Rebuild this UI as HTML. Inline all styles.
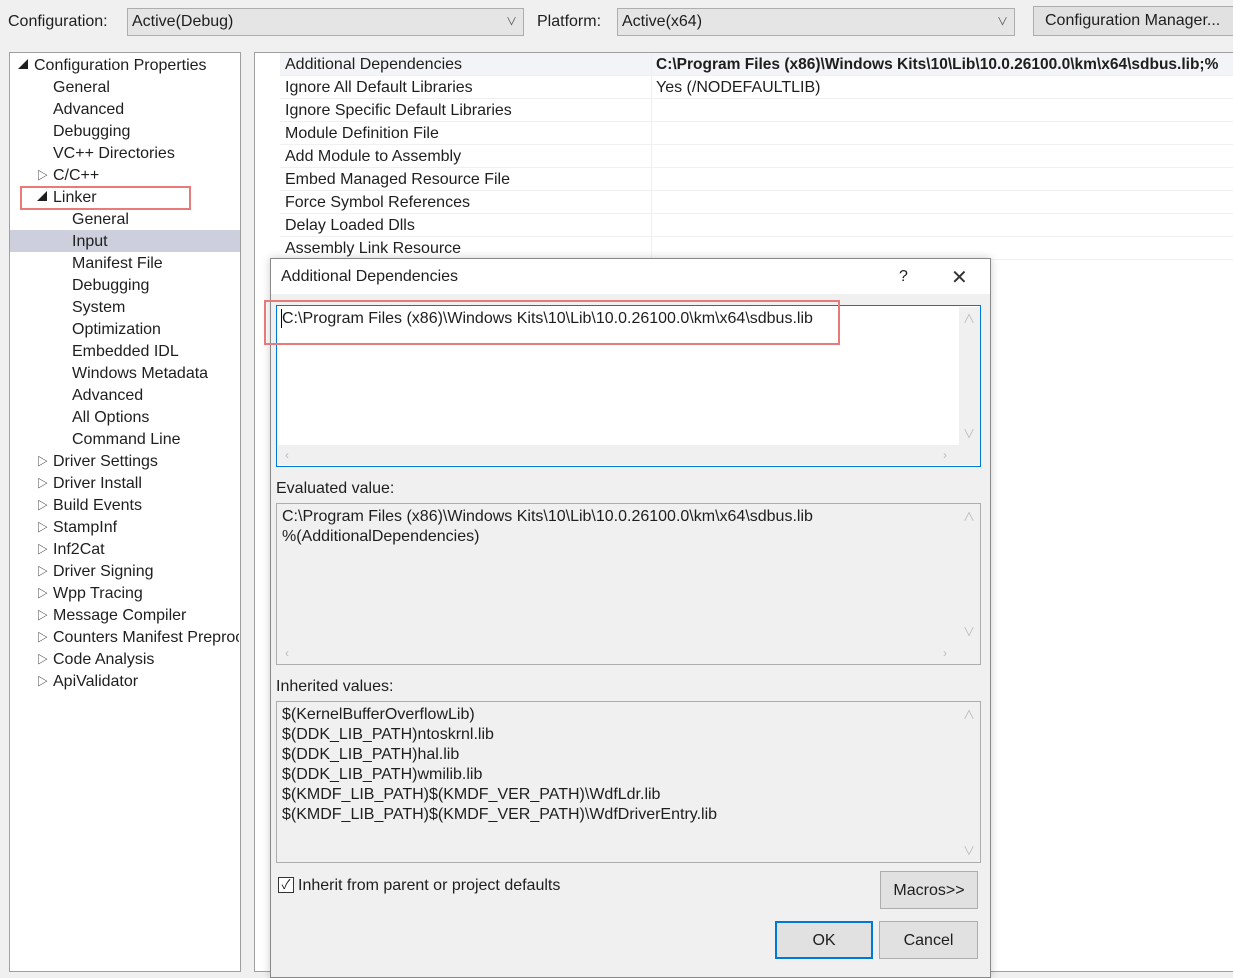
<!DOCTYPE html>
<html><head><style>
*{box-sizing:border-box;margin:0;padding:0}
body{width:1233px;height:965px;background:#f0f0f0;font-family:"Liberation Sans","Noto Sans CJK SC",sans-serif;font-size:16px;color:#1e1e1e;position:relative;overflow:hidden}
.a{position:absolute;white-space:nowrap}
.combo{position:absolute;background:#e5e5e5;border:1px solid #adadad;height:28px;line-height:26px;padding-left:4px}
.combo .v{position:absolute;right:6px;top:0;font-size:11px;color:#555}
.btn{position:absolute;background:#e1e1e1;border:1px solid #adadad;text-align:center}
.tree .a{line-height:22px}
.grid .r{position:absolute;left:280px;width:953px;height:23px;border-bottom:1px solid #f0f0f0;line-height:24px}
.box{position:absolute;left:276px;width:705px;height:162px;border:1px solid #adadad;background:#f0f0f0}
.box .t{position:absolute;left:5px;top:3px;line-height:20px;white-space:pre}
.ar{position:absolute;color:#bbb;font-size:12px;line-height:12px}
</style></head><body>
<div class="a" style="left:8px;top:13px">Configuration:</div>
<div class="combo" style="left:127px;top:8px;width:397px">Active(Debug)<span class="v">&#8744;</span></div>
<div class="a" style="left:537px;top:13px">Platform:</div>
<div class="combo" style="left:617px;top:8px;width:398px">Active(x64)<span class="v">&#8744;</span></div>
<div class="btn" style="left:1033px;top:6px;width:210px;height:30px;line-height:28px;text-align:left;padding-left:11px">Configuration Manager...</div>

<div class="tree" style="position:absolute;left:9px;top:52px;width:232px;height:920px;background:#fff;border:1px solid #a0a0a0">
<div class="a" style="left:0;top:177px;width:230px;height:22px;background:#cdd0dc"></div>
<div class="a" style="left:10px;top:133px;width:171px;height:24px;border:2px solid #e97a7a"></div>
<div class="a" style="left:8px;top:2px;font-size:10px">&#9698;</div>
<div class="a" style="left:24px;top:2px">Configuration Properties</div>
<div class="a" style="left:43px;top:24px">General</div>
<div class="a" style="left:43px;top:46px">Advanced</div>
<div class="a" style="left:43px;top:68px">Debugging</div>
<div class="a" style="left:43px;top:90px">VC++ Directories</div>
<div class="a" style="left:27px;top:112px;font-size:11px">&#9655;</div><div class="a" style="left:43px;top:112px">C/C++</div>
<div class="a" style="left:27px;top:134px;font-size:10px">&#9698;</div><div class="a" style="left:43px;top:134px">Linker</div>
<div class="a" style="left:62px;top:156px">General</div>
<div class="a" style="left:62px;top:178px">Input</div>
<div class="a" style="left:62px;top:200px">Manifest File</div>
<div class="a" style="left:62px;top:222px">Debugging</div>
<div class="a" style="left:62px;top:244px">System</div>
<div class="a" style="left:62px;top:266px">Optimization</div>
<div class="a" style="left:62px;top:288px">Embedded IDL</div>
<div class="a" style="left:62px;top:310px">Windows Metadata</div>
<div class="a" style="left:62px;top:332px">Advanced</div>
<div class="a" style="left:62px;top:354px">All Options</div>
<div class="a" style="left:62px;top:376px">Command Line</div>
<div class="a" style="left:27px;top:398px;font-size:11px">&#9655;</div><div class="a" style="left:43px;top:398px">Driver Settings</div>
<div class="a" style="left:27px;top:420px;font-size:11px">&#9655;</div><div class="a" style="left:43px;top:420px">Driver Install</div>
<div class="a" style="left:27px;top:442px;font-size:11px">&#9655;</div><div class="a" style="left:43px;top:442px">Build Events</div>
<div class="a" style="left:27px;top:464px;font-size:11px">&#9655;</div><div class="a" style="left:43px;top:464px">StampInf</div>
<div class="a" style="left:27px;top:486px;font-size:11px">&#9655;</div><div class="a" style="left:43px;top:486px">Inf2Cat</div>
<div class="a" style="left:27px;top:508px;font-size:11px">&#9655;</div><div class="a" style="left:43px;top:508px">Driver Signing</div>
<div class="a" style="left:27px;top:530px;font-size:11px">&#9655;</div><div class="a" style="left:43px;top:530px">Wpp Tracing</div>
<div class="a" style="left:27px;top:552px;font-size:11px">&#9655;</div><div class="a" style="left:43px;top:552px">Message Compiler</div>
<div class="a" style="left:27px;top:574px;font-size:11px">&#9655;</div><div class="a" style="left:43px;top:574px;width:186px;overflow:hidden">Counters Manifest Preprocessor</div>
<div class="a" style="left:27px;top:596px;font-size:11px">&#9655;</div><div class="a" style="left:43px;top:596px">Code Analysis</div>
<div class="a" style="left:27px;top:618px;font-size:11px">&#9655;</div><div class="a" style="left:43px;top:618px">ApiValidator</div>
</div>

<div class="grid" style="position:absolute;left:0;top:0">
<div style="position:absolute;left:254px;top:52px;width:990px;height:920px;background:#fff;border:1px solid #a0a0a0"></div>
<div class="r" style="top:53px;background:#f2f4f8"><span class="a" style="left:5px">Additional Dependencies</span><span class="a" style="left:376px;font-weight:bold;font-size:15.5px">C:\Program Files (x86)\Windows Kits\10\Lib\10.0.26100.0\km\x64\sdbus.lib;%</span></div>
<div class="r" style="top:76px"><span class="a" style="left:5px">Ignore All Default Libraries</span><span class="a" style="left:376px">Yes (/NODEFAULTLIB)</span></div>
<div class="r" style="top:99px"><span class="a" style="left:5px">Ignore Specific Default Libraries</span></div>
<div class="r" style="top:122px"><span class="a" style="left:5px">Module Definition File</span></div>
<div class="r" style="top:145px"><span class="a" style="left:5px">Add Module to Assembly</span></div>
<div class="r" style="top:168px"><span class="a" style="left:5px">Embed Managed Resource File</span></div>
<div class="r" style="top:191px"><span class="a" style="left:5px">Force Symbol References</span></div>
<div class="r" style="top:214px"><span class="a" style="left:5px">Delay Loaded Dlls</span></div>
<div class="r" style="top:237px"><span class="a" style="left:5px">Assembly Link Resource</span></div>
<div style="position:absolute;left:651px;top:53px;width:1px;height:207px;background:#f0f0f0"></div>
</div>

<div style="position:absolute;left:270px;top:258px;width:721px;height:720px;background:#f0f0f0;border:1px solid #888;box-shadow:0 0 8px rgba(0,0,0,.2)">
<div style="position:absolute;left:0;top:0;right:0;height:35px;background:#fff"></div>
<div class="a" style="left:10px;top:9px">Additional Dependencies</div>
<div class="a" style="left:628px;top:9px">?</div>
<div class="a" style="left:680px;top:6px;font-size:20px;font-weight:300;color:#333">&#10005;</div>
</div>

<div class="box" style="top:305px;border-color:#0078d7;background:#fff"><div class="t" style="top:3px">C:\Program Files (x86)\Windows Kits\10\Lib\10.0.26100.0\km\x64\sdbus.lib</div>
<div style="position:absolute;left:682px;top:1px;width:21px;height:158px;background:#f0f0f0"></div>
<div style="position:absolute;left:1px;top:139px;width:682px;height:20px;background:#f0f0f0"></div>
<div class="ar" style="left:686px;top:7px">&#8743;</div><div class="ar" style="left:686px;top:122px">&#8744;</div>
<div class="ar" style="left:8px;top:143px">&lsaquo;</div><div class="ar" style="left:666px;top:143px">&rsaquo;</div></div>
<div class="a" style="left:264px;top:300px;width:576px;height:45px;border:2px solid #e97a7a"></div>
<div class="a" style="left:281px;top:309px;width:1px;height:19px;background:#000"></div>

<div class="a" style="left:276px;top:480px">Evaluated value:</div>
<div class="box" style="top:503px"><div class="t">C:\Program Files (x86)\Windows Kits\10\Lib\10.0.26100.0\km\x64\sdbus.lib
%(AdditionalDependencies)</div>
<div class="ar" style="left:686px;top:7px">&#8743;</div><div class="ar" style="left:686px;top:122px">&#8744;</div>
<div class="ar" style="left:8px;top:143px">&lsaquo;</div><div class="ar" style="left:666px;top:143px">&rsaquo;</div></div>

<div class="a" style="left:276px;top:678px">Inherited values:</div>
<div class="box" style="top:701px"><div class="t">$(KernelBufferOverflowLib)
$(DDK_LIB_PATH)ntoskrnl.lib
$(DDK_LIB_PATH)hal.lib
$(DDK_LIB_PATH)wmilib.lib
$(KMDF_LIB_PATH)$(KMDF_VER_PATH)\WdfLdr.lib
$(KMDF_LIB_PATH)$(KMDF_VER_PATH)\WdfDriverEntry.lib</div>
<div class="ar" style="left:686px;top:7px">&#8743;</div><div class="ar" style="left:686px;top:143px">&#8744;</div></div>

<div class="a" style="left:278px;top:877px;width:16px;height:16px;border:1px solid #333;background:#fff;font-size:13px;line-height:14px;text-align:center">&#10003;</div>
<div class="a" style="left:298px;top:877px">Inherit from parent or project defaults</div>
<div class="btn" style="left:880px;top:871px;width:98px;height:38px;line-height:38px">Macros&gt;&gt;</div>
<div class="btn" style="left:775px;top:921px;width:98px;height:38px;line-height:36px;border:2px solid #0078d7">OK</div>
<div class="btn" style="left:879px;top:921px;width:99px;height:38px;line-height:38px">Cancel</div>
</body></html>
